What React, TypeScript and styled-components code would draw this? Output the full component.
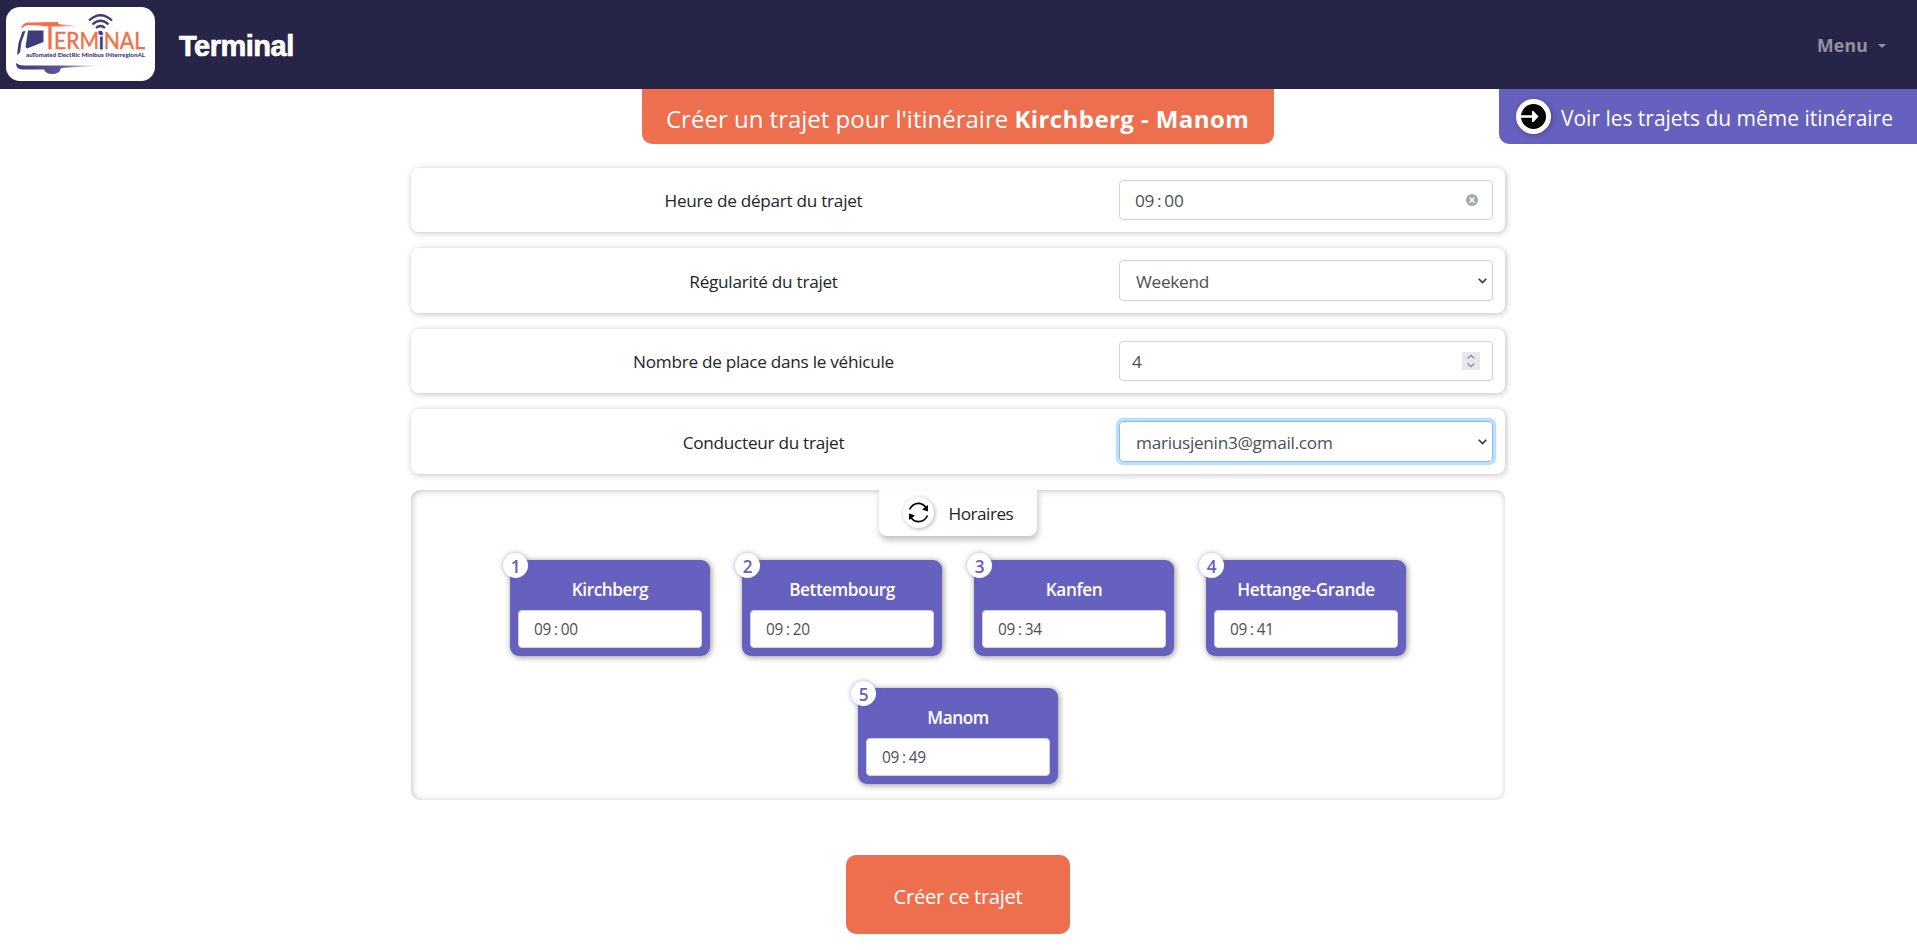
import React from "react";
import styled, { createGlobalStyle, css } from "styled-components";

const Global = createGlobalStyle`
  * { box-sizing: border-box; }
  body {
    margin: 0;
    background: #fff;
    color: #212529;
    font-family: "Open Sans", "Noto Sans", sans-serif;
    font-size: 17.2px;
    line-height: 26px;
    letter-spacing: -0.28px;
  }
`;

const Header = styled.header`
  height: 89px;
  padding: 0 31px 0 6px;
  background: #272547;
  display: flex;
  align-items: center;
`;
const LogoBox = styled.div`
  width: 149px;
  height: 74px;
  margin-top: -1px;
  border-radius: 14px;
  background: #fff;
  overflow: hidden;
  letter-spacing: 0;
  svg { display: block; }
`;
const Brand = styled.div`
  margin-left: 24px;
  flex: 1;
  color: #fff;
  font: bold 29px/34px "Liberation Sans", Arial, sans-serif;
  letter-spacing: -0.5px;
  -webkit-text-stroke: 0.7px #fff;
  margin-top: 3px;
`;
const Menu = styled.div`
  display: flex;
  align-items: center;
  gap: 10px;
  color: #9392a3;
  font-weight: 700;
  font-size: 17.6px;
  letter-spacing: 0.2px;
`;
const Caret = styled.i`
  border: 4px solid transparent;
  border-top-color: currentColor;
  border-bottom: 0;
  margin-top: 2px;
`;
const Band = styled.div`
  display: grid;
  grid-template-columns: 1fr 632px 1fr;
  height: 55px;
  color: #fff;
  padding-right: 1px;
`;
const Title = styled.h1`
  grid-column: 2;
  height: 55px;
  margin: 0;
  background: #ed6f4e;
  border-radius: 0 0 10px 10px;
  font-weight: 400;
  font-size: 24px;
  line-height: 60px;
  letter-spacing: 0;
  padding-left: 24px;
  white-space: nowrap;
  b { font-weight: 700; letter-spacing: 0.42px; }
`;
const SideLink = styled.a`
  justify-self: end;
  width: 418px;
  height: 55px;
  margin-right: -1px;
  background: #6660be;
  border-radius: 0 0 0 10px;
  display: flex;
  align-items: center;
  gap: 10px;
  padding-left: 17px;
  font-size: 21px;
  letter-spacing: -0.02px;
  white-space: nowrap;
`;
const LinkLabel = styled.span`
  padding-top: 3px;
`;
const ArrowDisc = styled.span`
  width: 35px;
  height: 35px;
  border-radius: 50%;
  background: #fff;
  display: grid;
  place-items: center;
  box-shadow: 1px 1px 5px rgba(0, 0, 0, 0.25);
`;
const Form = styled.main`
  width: 1094px;
  margin: 24px 0 0 calc(50% - 547.5px);
  display: flex;
  flex-direction: column;
  gap: 16px;
`;
const Row = styled.div`
  display: grid;
  grid-template-columns: 681px 374px;
  gap: 15px;
  padding: 12px;
  border-radius: 8px;
  box-shadow: 1px 1px 6px rgba(0, 0, 0, 0.25);
  align-items: center;
`;
const Label = styled.span`
  padding-top: 2.6px;
  text-align: center;
`;
const Control = styled.div<{ $tall?: boolean; $focus?: boolean; $pad: number; $end: number }>`
  height: ${(p) => (p.$tall ? 40.9 : 40.1)}px;
  border: 1px solid #ced4da;
  border-radius: 4px;
  padding: 0 ${(p) => p.$end}px 0 ${(p) => p.$pad}px;
  color: #495057;
  display: flex;
  align-items: center;
  justify-content: space-between;
  ${(p) => p.$focus && css`border-color: #80bdff; box-shadow: 0 0 0 3.2px rgba(0, 123, 255, 0.25);`}
`;
const Value = styled.span`
  padding-top: 2.4px;
`;
const Time = styled.span`
  display: inline-flex;
  gap: 3px;
  padding-top: 2.4px;
`;
const Schedule = styled.section`
  height: 310px;
  border-radius: 9px;
  box-shadow: inset 1px 1px 6px rgba(0, 0, 0, 0.25);
  display: flex;
  flex-direction: column;
  align-items: center;
`;
const Tab = styled.div`
  width: 158px;
  height: 46px;
  border-radius: 0 0 8px 8px;
  background: #fff;
  box-shadow: 1px 4px 6px rgba(0, 0, 0, 0.25);
  display: flex;
  align-items: center;
  gap: 15px;
  padding-left: 23.5px;
  letter-spacing: -0.5px;
`;
const RefreshDisc = styled.span`
  width: 31px;
  height: 31px;
  border-radius: 50%;
  display: grid;
  place-items: center;
  box-shadow: 1px 1px 4px rgba(0, 0, 0, 0.3);
`;
const Stops = styled.div`
  display: flex;
  flex-wrap: wrap;
  justify-content: center;
  gap: 32px;
  margin-top: 24px;
`;
const Stop = styled.article`
  position: relative;
  width: 200px;
  height: 96px;
  padding: 16px 8px 8px;
  border-radius: 9px;
  background: #6660be;
  box-shadow: 1px 1px 6px rgba(0, 0, 0, 0.45);
`;
const StopName = styled.div`
  height: 34px;
  line-height: 28px;
  color: #fff;
  font-weight: 600;
  letter-spacing: -0.42px;
  text-align: center;
`;
const StopTime = styled.div`
  height: 38px;
  border: 1px solid #ced4da;
  border-radius: 4px;
  background: #fff;
  color: #495057;
  padding: 0 15px;
  font-size: 15.4px;
  display: flex;
  align-items: center;
`;
const Badge = styled.span`
  position: absolute;
  left: -7px;
  top: -7px;
  width: 25px;
  height: 25px;
  border-radius: 50%;
  background: #fff;
  color: #6660be;
  font-weight: 600;
  line-height: 27px;
  text-align: center;
  box-shadow: 0 0 5px rgba(102, 96, 190, 0.55);
`;
const Submit = styled.button`
  width: 224px;
  height: 79px;
  margin: 39px auto 0;
  padding: 3px 0 0;
  border: 0;
  border-radius: 10px;
  background: #ed6f4e;
  color: #fff;
  font: inherit;
  font-size: 20.3px;
  letter-spacing: -0.36px;
`;

const Logo = () => (
  <svg width="149" height="74" viewBox="6 7 149 74">
    <defs>
      <linearGradient id="roof">
        <stop offset="0" stopColor="#f26f4a" />
        <stop offset="0.6" stopColor="#f26f4a" />
        <stop offset="1" stopColor="#f26f4a" stopOpacity="0" />
      </linearGradient>
      <linearGradient id="floor">
        <stop offset="0" stopColor="#3d3c7c" />
        <stop offset="0.5" stopColor="#5a589a" />
        <stop offset="1" stopColor="#6866a0" stopOpacity="0" />
      </linearGradient>
    </defs>
    <path d="M21 29Q22 23 28 22.500L58 22V24L82 26.300 58 26.500 28 25Q24 25.500 21 29Z" fill="url(#roof)" />
    <path d="M22.500 31.500 25.500 31 21.500 42 20 52.500 17 55 18.500 43ZM28 30.500H43.500V42L27 48.500 25.500 47Z" fill="#3d3c7c" />
    <path d="M16 63Q19 65.500 24 65.500H104L61 68Q60 74 52 74 46 74 44 69.500H22Q16 69 16 63Z" fill="url(#floor)" />
    <g fill="none" stroke="#3d3c7c" strokeWidth="2.300">
      <path d="M89 20.500Q100.500 10 112 20.500" />
      <path d="M92.500 24.500Q100.500 17 108.500 24.500" />
      <path d="M96 28Q100.500 24 105 28" />
    </g>
    <rect x="98.500" y="31" width="3.500" height="3.500" fill="#3d3c7c" />
    <g fill="#f26f4a" stroke="#f26f4a" strokeWidth="0.400" fontFamily="Lato">
      <text x="41.500" y="49" fontSize="37" textLength="17" lengthAdjust="spacingAndGlyphs">T</text>
      <text x="54" y="49" fontSize="22.500" textLength="91" lengthAdjust="spacingAndGlyphs">
        ERM<tspan fill="#3d3c7c" stroke="#3d3c7c" strokeWidth="0.800">i</tspan>NAL
      </text>
    </g>
    <text x="26" y="57" fontSize="5.600" fontFamily="Lato" fontWeight="900" fill="#3d3c7c" textLength="119" lengthAdjust="spacingAndGlyphs">
      auTomated ElectRic Minibus INterregionAL
    </text>
  </svg>
);

const Chevron = () => (
  <svg width="9" height="6" viewBox="0 0 9 6" fill="none" stroke="#343a40" strokeWidth="1.600">
    <path d="M0.700 0.700 4.500 4.500 8.300 0.700" />
  </svg>
);

const ArrowIcon = () => (
  <svg width="25" height="25" viewBox="0 0 25 25">
    <circle cx="12.500" cy="12.500" r="12.500" />
    <path d="M0 11.200H11V7.500Q11.500 6 13 7.500L17.500 12.500 13 17.500Q11.500 19 11 17.500V13.800H0Z" fill="#fff" />
  </svg>
);

const RefreshIcon = () => (
  <svg width="21" height="21" viewBox="0 0 21 21">
    <path d="M1.500 7.500Q4.500 1.300 10.500 1.300 15 1.300 18 5.500M19.500 13.500Q16.500 19.700 10.500 19.700 6 19.700 3 15.500" fill="none" stroke="#000" strokeWidth="1.700" />
    <path d="M20 3V9.500L14 7.500ZM1 18V11.500L7 13.500Z" />
  </svg>
);

const ClearIcon = () => (
  <svg width="12" height="12" viewBox="0 0 12 12">
    <circle cx="6" cy="6" r="6" fill="#a4a7ab" />
    <path d="M3.500 3.500 8.500 8.500M8.500 3.500 3.500 8.500" stroke="#fff" strokeWidth="1.500" />
  </svg>
);

const Spinner = () => (
  <svg width="18" height="18" viewBox="0 0 18 18">
    <rect width="18" height="18" fill="#e9e9ed" />
    <path d="M5.500 6.500 9 3.500 12.500 6.500M5.500 11.500 9 14.500 12.500 11.500" fill="none" stroke="#8f8f9d" strokeWidth="1.500" />
  </svg>
);

const Clock = ({ value }: { value: string }) => {
  const [h, m] = value.split(":");
  return (
    <Time>
      <span>{h}</span>
      <span>:</span>
      <span>{m}</span>
    </Time>
  );
};

const stops = [
  ["Kirchberg", "09:00"],
  ["Bettembourg", "09:20"],
  ["Kanfen", "09:34"],
  ["Hettange-Grande", "09:41"],
  ["Manom", "09:49"],
];

export default function App() {
  return (
    <>
      <Global />
      <Header>
        <LogoBox><Logo /></LogoBox>
        <Brand>Terminal</Brand>
        <Menu>Menu<Caret /></Menu>
      </Header>
      <Band>
        <Title>Créer un trajet pour l'itinéraire <b>Kirchberg - Manom</b></Title>
        <SideLink>
          <ArrowDisc><ArrowIcon /></ArrowDisc>
          <LinkLabel>Voir les trajets du même itinéraire</LinkLabel>
        </SideLink>
      </Band>
      <Form>
        <Row>
          <Label>Heure de départ du trajet</Label>
          <Control $pad={15} $end={14}><Clock value="09:00" /><ClearIcon /></Control>
        </Row>
        <Row>
          <Label>Régularité du trajet</Label>
          <Control $tall $pad={16} $end={5}><Value>Weekend</Value><Chevron /></Control>
        </Row>
        <Row>
          <Label>Nombre de place dans le véhicule</Label>
          <Control $pad={12} $end={12}><Value>4</Value><Spinner /></Control>
        </Row>
        <Row>
          <Label>Conducteur du trajet</Label>
          <Control $tall $focus $pad={16} $end={5}><Value>mariusjenin3@gmail.com</Value><Chevron /></Control>
        </Row>
        <Schedule>
          <Tab>
            <RefreshDisc><RefreshIcon /></RefreshDisc>
            <Value>Horaires</Value>
          </Tab>
          <Stops>
            {stops.map(([name, time], i) => (
              <Stop key={name}>
                <Badge>{i + 1}</Badge>
                <StopName>{name}</StopName>
                <StopTime><Clock value={time} /></StopTime>
              </Stop>
            ))}
          </Stops>
        </Schedule>
        <Submit>Créer ce trajet</Submit>
      </Form>
    </>
  );
}
